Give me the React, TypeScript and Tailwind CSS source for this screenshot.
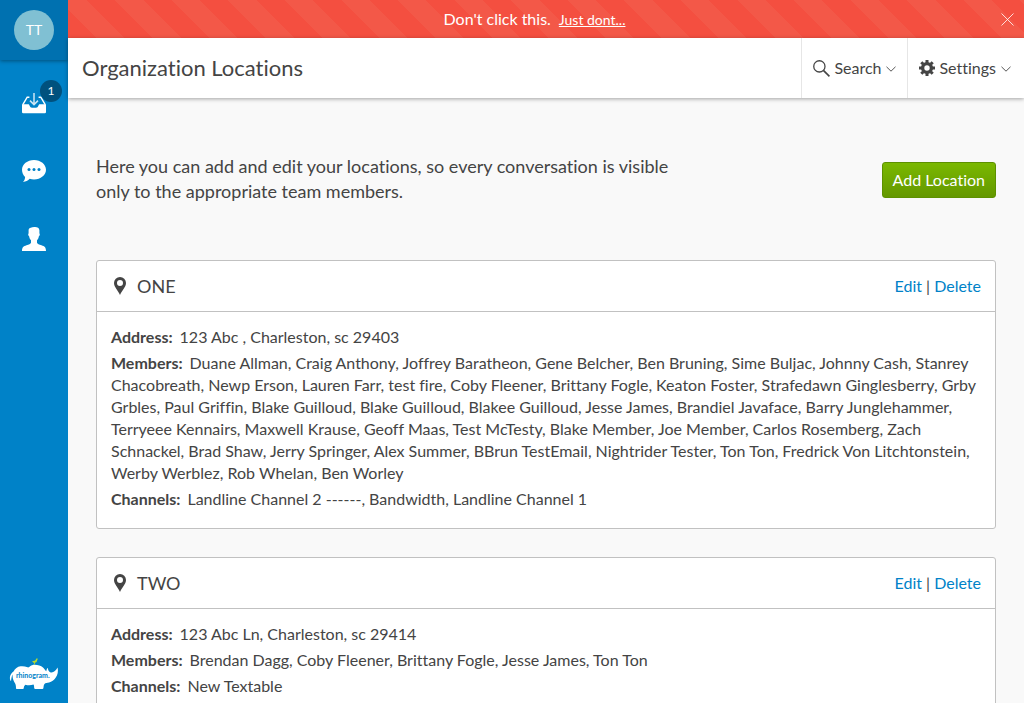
import React from "react";

type Location = {
  name: string;
  address: string;
  members: string;
  channels: string;
};

const locations: Location[] = [
  {
    name: "ONE",
    address: "123 Abc , Charleston, sc 29403",
    members:
      "Duane Allman, Craig Anthony, Joffrey Baratheon, Gene Belcher, Ben Bruning, Sime Buljac, Johnny Cash, Stanrey Chacobreath, Newp Erson, Lauren Farr, test fire, Coby Fleener, Brittany Fogle, Keaton Foster, Strafedawn Ginglesberry, Grby Grbles, Paul Griffin, Blake Guilloud, Blake Guilloud, Blakee Guilloud, Jesse James, Brandiel Javaface, Barry Junglehammer, Terryeee Kennairs, Maxwell Krause, Geoff Maas, Test McTesty, Blake Member, Joe Member, Carlos Rosemberg, Zach Schnackel, Brad Shaw, Jerry Springer, Alex Summer, BBrun TestEmail, Nightrider Tester, Ton Ton, Fredrick Von Litchtonstein, Werby Werblez, Rob Whelan, Ben Worley",
    channels: "Landline Channel 2 ------, Bandwidth, Landline Channel 1",
  },
  {
    name: "TWO",
    address: "123 Abc Ln, Charleston, sc 29414",
    members: "Brendan Dagg, Coby Fleener, Brittany Fogle, Jesse James, Ton Ton",
    channels: "New Textable",
  },
];

function InboxIcon() {
  return (
    <svg width="24" height="22" viewBox="0 0 24 22" aria-hidden="true">
      <path
        d="M7.4 5.2H5.2L.8 12.6M16.6 5.2h2.2l4.4 7.4"
        fill="none"
        stroke="#fff"
        strokeWidth="1.4"
      />
      <path
        d="M0 12.2h6.2c.8 0 1 .5 1.4 1.5.5 1.3 1.2 2 2.4 2h4c1.2 0 1.9-.7 2.4-2 .4-1 .6-1.5 1.4-1.5H24V20a1.200 1.200 0 0 1-1.200 1.200H1.200A1.200 1.200 0 0 1 0 20z"
        fill="#fff"
      />
      <path d="M12 1v11M8 8.6l4 4 4-4" fill="none" stroke="#cce6f4" strokeWidth="1.5" />
    </svg>
  );
}

function ChatIcon() {
  return (
    <svg width="24" height="22" viewBox="0 0 24 22" aria-hidden="true">
      <path
        d="M12 0c6.6 0 12 4.3 12 9.7s-5.4 9.7-12 9.7c-1.5 0-3-.2-4.3-.6C6 20.5 3.8 21.700 1 22c1.200-1.300 2-2.900 2.100-5.100C1.200 15.100 0 12.500 0 9.700 0 4.300 5.400 0 12 0z"
        fill="#fff"
      />
      <circle cx="7" cy="9.6" r="1.5" fill="#0082c8" />
      <circle cx="12" cy="9.6" r="1.5" fill="#0082c8" />
      <circle cx="17" cy="9.6" r="1.5" fill="#0082c8" />
    </svg>
  );
}

function PersonIcon() {
  return (
    <svg width="24" height="24" viewBox="0 0 24 24" aria-hidden="true">
      <path
        d="M12.300 0c2.700-.1 5 .9 5.100 3.300v3.200c.7.300.5 2-.5 2.800-.3 1.800-1 3.200-1.900 4v2.500c.3 1.300 2.200 1.700 4.500 2.500 3 1 4.500 2 4.500 5.700H0c0-3.700 1.500-4.700 4.500-5.700 2.300-.8 4.200-1.200 4.500-2.500v-2.500c-.9-.8-1.600-2.200-1.900-4-1-.8-1.200-2.500-.5-2.800V3c0-1.200 1-2 2.200-2.200.8-.5 2-.8 3.500-.8z"
        fill="#fff"
      />
    </svg>
  );
}

function RhinoLogo() {
  return (
    <svg width="50" height="34" viewBox="0 0 50 34" role="img" aria-label="rhinogram">
      <path
        d="M4.500 14.500C6 11.500 8.500 9.700 11.500 9.300c2.500-.3 5 .1 7 1 2 .8 2.800-2.500 7-2.500 3.500 0 6.500 1 8.500 2.700 1.500 1.300 2 2.800 3.300 3.700.2-1.500.6-2.700 1.500-3.500.2 2 .8 3.800 2.400 4.500 3 1 5.500-1.500 7.400-4.700.8 3.500.2 7.500-2 10.300-1.700 2.400-3.800 4.200-6.500 4.700-2 .3-3.700.3-4.600 1.500-.8 1-.9 2.500-1.100 4-.1.600-.4.900-1 .9h-7.200c-.6 0-.9-.3-1-.9-.1-1.300 0-2.500-.7-3.500-2.500.9-5.500 1-8 .2-1.300.7-1.600 2-1.700 3.300 0 .6-.4.900-1 .9H8c-.7 0-1-.4-1-1 0-2.300-.4-4-1.600-5.700C3.900 22.700 3.400 20.300 3.600 17.500 2.600 19.500 2.300 22 2 24.300 0 21.500.8 17 4.500 14.500z"
        fill="#fff"
      />
      <path
        d="M23.300 3.900c1.500.2 2.700-.1 3.400-1C27 1.600 27.700 1.200 29 1.900c-.5.2-.7.500-.8 1-.1 1.500-.9 2.600-2.300 2.800v1.800h-.8V5.800c-.9-.2-1.500-.9-1.800-1.900z"
        fill="#b5d92c"
      />
      <text x="7" y="21" fill="#0082c8" fontSize="7" fontWeight="700" className="font-[Lato,sans-serif]">
        rhinogram.
      </text>
    </svg>
  );
}

function SearchIcon() {
  return (
    <svg width="17" height="17" viewBox="0 0 16 16" fill="none" stroke="#444" aria-hidden="true">
      <circle cx="6" cy="6" r="5.3" strokeWidth="1.2" />
      <path d="M9.800 9.800L15.500 15.400" strokeWidth="1.6" />
    </svg>
  );
}

function GearIcon() {
  return (
    <svg width="16" height="16" viewBox="0 0 16 16" aria-hidden="true">
      <g fill="none" stroke="#444">
        <circle cx="8" cy="8" r="4.4" strokeWidth="3.4" />
        <path
          d="M8 0v3M8 13v3M0 8h3M13 8h3M2.300 2.300l2 2M11.700 11.700l2 2M2.300 13.700l2-2M11.700 4.300l2-2"
          strokeWidth="3"
        />
      </g>
    </svg>
  );
}

function Chevron() {
  return (
    <svg width="10" height="6" viewBox="0 0 10 6" fill="none" className="mt-[2px]" aria-hidden="true">
      <path d="M.5.8L5 5.200 9.500.8" stroke="#555" />
    </svg>
  );
}

function PinIcon() {
  return (
    <svg width="12" height="18" viewBox="0 0 12 18" aria-hidden="true">
      <path
        fillRule="evenodd"
        fill="#444"
        d="M6 0a6 6 0 0 1 6 6c0 4-4 7.500-6 12C4 13.500 0 10 0 6a6 6 0 0 1 6-6zm0 3.100a3 3 0 1 0 0 6 3 3 0 0 0 0-6z"
      />
    </svg>
  );
}

function Field({ label, value }: { label: string; value: string }) {
  return (
    <div className="mb-1">
      <dt className="mr-[7px] inline font-bold">{label}:</dt>
      <dd className="inline">{value}</dd>
    </div>
  );
}

function LocationCard({ location }: { location: Location }) {
  return (
    <section className="rounded-[3px] border border-[#c1c1c1] bg-white">
      <header className="flex h-[51px] items-center justify-between border-b border-[#c1c1c1] px-[14px]">
        <div className="flex items-center gap-[11px] pl-[3px]">
          <PinIcon />
          <h2 className="text-[18px]">{location.name}</h2>
        </div>
        <div>
          <a href="#edit" className="text-[#0082c8]">Edit</a>
          {" | "}
          <a href="#delete" className="text-[#0082c8]">Delete</a>
        </div>
      </header>
      <dl className="p-[14px]">
        <Field label="Address" value={location.address} />
        <Field label="Members" value={location.members} />
        <Field label="Channels" value={location.channels} />
      </dl>
    </section>
  );
}

export default function App() {
  return (
    <div className="flex h-screen overflow-hidden bg-[#f9f9f9] font-[Lato,sans-serif] text-[16px] leading-[22px] text-[#444] [font-variant-ligatures:none]">
      <nav className="flex w-[68px] shrink-0 flex-col items-center bg-[#0082c8]">
        <div className="flex h-[60px] w-full items-center justify-center bg-[#0071b0] shadow-[0_1px_4px_rgba(0,0,0,0.4)]">
          <button className="size-10 rounded-full bg-[#80c0d3] text-[14px] text-white">TT</button>
        </div>
        <div className="flex w-full flex-1 flex-col pt-[9px]">
          <a href="#inbox" aria-label="Inbox" className="relative flex h-[68px] items-center justify-center">
            <InboxIcon />
            <span className="absolute top-[11px] right-[6px] flex size-[22px] items-center justify-center rounded-full bg-[#00517e] text-[12px] text-white">
              1
            </span>
          </a>
          <a href="#messages" aria-label="Messages" className="flex h-[68px] items-center justify-center">
            <ChatIcon />
          </a>
          <a href="#contacts" aria-label="Contacts" className="flex h-[68px] items-center justify-center">
            <PersonIcon />
          </a>
        </div>
        <div className="pb-3">
          <RhinoLogo />
        </div>
      </nav>

      <div className="flex min-w-0 flex-1 flex-col">
        <div className="flex h-[38px] shrink-0 items-center bg-[repeating-linear-gradient(45deg,#f44f40_0px,#f44f40_20px,#f35848_20px,#f35848_40px)] pr-[10px] text-white">
          <p className="flex flex-1 items-baseline justify-center gap-2">
            <span>Don't click this.</span>
            <a href="#dont" className="text-[14px] underline">Just dont...</a>
          </p>
          <button aria-label="Dismiss">
            <svg width="13" height="13" viewBox="0 0 13 13" stroke="#fff" strokeOpacity="0.8" aria-hidden="true">
              <path d="M.5.5l12 12M12.500.5l-12 12" />
            </svg>
          </button>
        </div>

        <header className="z-10 flex h-[60px] shrink-0 items-stretch bg-white shadow-[0_1px_4px_rgba(0,0,0,0.35)]">
          <h1 className="flex flex-1 items-center pl-[14px] text-[22px]">Organization Locations</h1>
          <button className="flex items-center border-l border-[#e6e6e6] px-[11px]">
            <SearchIcon />
            <span className="mr-[5px] ml-1">Search</span>
            <Chevron />
          </button>
          <button className="flex items-center border-l border-[#e6e6e6] pr-[13px] pl-[11px]">
            <GearIcon />
            <span className="mr-[5px] ml-1">Settings</span>
            <Chevron />
          </button>
        </header>

        <main className="min-h-0 flex-1 overflow-hidden px-7 pt-14">
          <div className="flex items-start justify-between">
            <p className="max-w-[600px] text-[18px] leading-[25px]">
              Here you can add and edit your locations, so every conversation is visible only to the appropriate team
              members.
            </p>
            <button className="mt-2 h-9 rounded-[3px] border border-[#5d9100] bg-linear-to-b from-[#7ab800] to-[#649800] px-[10px] text-white">
              Add Location
            </button>
          </div>
          <div className="mt-14 flex flex-col gap-7">
            {locations.map((location) => (
              <LocationCard key={location.name} location={location} />
            ))}
          </div>
        </main>
      </div>
    </div>
  );
}
